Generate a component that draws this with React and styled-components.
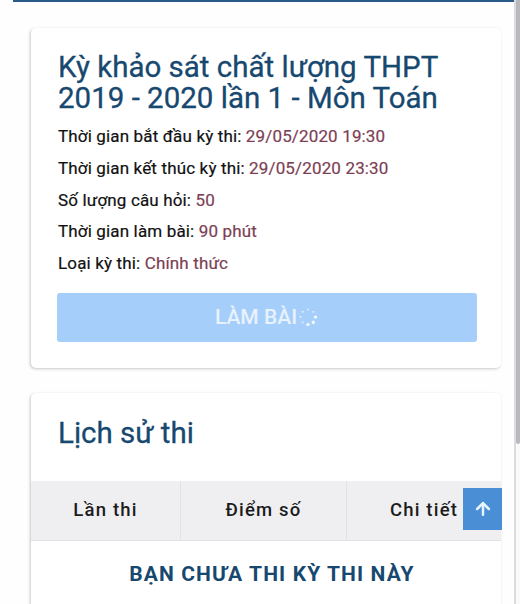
import React from "react";
import styled, { createGlobalStyle } from "styled-components";
import { ArrowUp } from "lucide-react";

const GlobalStyle = createGlobalStyle`
  html, body {
    margin: 0;
    height: 100%;
    overflow: hidden;
    background: #fefefe;
    font-family: Roboto, "Liberation Sans", sans-serif;
  }
`;

const Page = styled.div`
  display: flex;
  height: 604px;
  overflow: hidden;
`;

const Main = styled.main`
  flex: 1;
  min-width: 0;
`;

const TopBar = styled.div`
  height: 2px;
  margin-left: 13px;
  background: #2a5a85;
`;

const Content = styled.div`
  display: flex;
  flex-direction: column;
  gap: 25px;
  padding: 26px 13px 0 31px;
`;

const Card = styled.section`
  background: #fff;
  border-radius: 5px;
  box-shadow: -1px 1px 3px rgba(0, 0, 0, 0.22);
`;

const InfoCard = styled(Card)`
  height: 340px;
  box-sizing: border-box;
  padding: 24px 24px 0 26px;
`;

const Title = styled.h1`
  margin: 0 0 7px 1px;
  color: #17486f;
  font-size: 29.5px;
  font-weight: 400;
  line-height: 31px;
  -webkit-text-stroke: 0.3px #17486f;
  white-space: nowrap;
`;

const InfoRow = styled.p`
  margin: 0 0 0 1px;
  color: #111;
  font-size: 17px;
  font-weight: 400;
  line-height: 31.75px;
  letter-spacing: 0.15px;
  -webkit-text-stroke: 0.2px currentColor;

  span {
    color: #7c3f55;
  }
`;

const StartButton = styled.button`
  display: flex;
  align-items: center;
  justify-content: center;
  gap: 0;
  width: 100%;
  height: 49px;
  margin-top: 13px;
  padding: 0;
  border: 0;
  border-radius: 3px;
  background: #a6cefb;
  color: #e8f2fd;
  font-family: inherit;
  font-size: 21px;
  font-weight: 500;
`;

const HistoryCard = styled(Card)`
  height: 300px;
`;

const HistoryTitle = styled.h2`
  margin: 0;
  height: 88px;
  box-sizing: border-box;
  padding: 22px 0 0 27px;
  color: #17486f;
  font-size: 29.5px;
  font-weight: 400;
  line-height: 36px;
  -webkit-text-stroke: 0.3px #17486f;
`;

const TableWrap = styled.div`
  position: relative;
`;

const HeaderRow = styled.div`
  display: grid;
  grid-template-columns: 149px 166px 1fr;
  height: 59px;
  background: #efeff2;
  border-bottom: 1px solid #e3e3e6;
`;

const HeaderCell = styled.div`
  display: flex;
  align-items: center;
  justify-content: center;
  padding-bottom: 2px;
  color: #1c1c1c;
  font-size: 18.5px;
  font-weight: 500;
  letter-spacing: 1.2px;

  & + & {
    border-left: 1px solid #e2e2e5;
  }
`;

const EmptyMessage = styled.div`
  padding: 20px 0 0 12px;
  color: #17486f;
  font-size: 21px;
  font-weight: 700;
  line-height: 26px;
  letter-spacing: 1.1px;
  text-align: center;
`;

const ScrollTop = styled.button`
  position: absolute;
  top: 7px;
  right: -1px;
  display: flex;
  align-items: center;
  justify-content: center;
  width: 39px;
  height: 42px;
  padding: 0;
  border: 0;
  background: #4a8fd6;
  color: #eaf4fd;
`;

const ScrollRail = styled.div`
  width: 6px;
  background: #fafafa;
  border-left: 2px solid #dcdce0;
  box-sizing: border-box;
`;

const ScrollThumb = styled.div`
  width: 4px;
  height: 444px;
  background: #b9b9bd;
  border-radius: 0 0 2px 2px;
`;

const Spinner = () => {
  const dots = [0, 45, 90, 135, 180, 225, 270, 315];
  return (
    <svg width="22" height="22" viewBox="0 0 22 22" aria-hidden="true">
      {dots.map((deg, i) => (
        <circle
          key={deg}
          cx="11"
          cy="3.5"
          r={i > 1 && i < 5 ? 1.6 : 1}
          fill="#fff"
          opacity={i > 1 && i < 5 ? 0.95 : 0.65}
          transform={`rotate(${deg} 11 11)`}
        />
      ))}
    </svg>
  );
};

const info = [
  ["Thời gian bắt đầu kỳ thi:", "29/05/2020 19:30"],
  ["Thời gian kết thúc kỳ thi:", "29/05/2020 23:30"],
  ["Số lượng câu hỏi:", "50"],
  ["Thời gian làm bài:", "90 phút"],
  ["Loại kỳ thi:", "Chính thức"],
];

const App = () => {
  return (
    <Page>
      <GlobalStyle />
      <Main>
        <TopBar />
        <Content>
          <InfoCard>
            <Title>
              Kỳ khảo sát chất lượng THPT
              <br />
              2019 - 2020 lần 1 - Môn Toán
            </Title>
            {info.map(([label, value]) => (
              <InfoRow key={label}>
                {label} <span>{value}</span>
              </InfoRow>
            ))}
            <StartButton>
              LÀM BÀI
              <Spinner />
            </StartButton>
          </InfoCard>
          <HistoryCard>
            <HistoryTitle>Lịch sử thi</HistoryTitle>
            <TableWrap>
              <HeaderRow>
                <HeaderCell>Lần thi</HeaderCell>
                <HeaderCell>Điểm số</HeaderCell>
                <HeaderCell>Chi tiết</HeaderCell>
              </HeaderRow>
              <EmptyMessage>BẠN CHƯA THI KỲ THI NÀY</EmptyMessage>
              <ScrollTop>
                <ArrowUp size={20} strokeWidth={3} />
              </ScrollTop>
            </TableWrap>
          </HistoryCard>
        </Content>
      </Main>
      <ScrollRail>
        <ScrollThumb />
      </ScrollRail>
    </Page>
  );
};

export default App;
